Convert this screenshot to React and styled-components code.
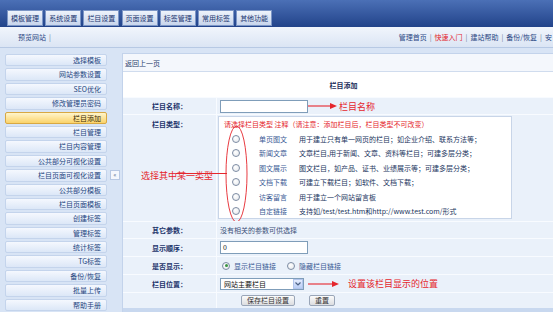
import styled, { createGlobalStyle } from 'styled-components';

/* 전역 */
const GlobalStyle = createGlobalStyle`
    html, body {
        margin: 0;
        padding: 0;
        background: #ffffff;
    }
    body {
        font-family: "Noto Sans CJK SC", "Liberation Sans", sans-serif;
    }
`;

const tabs = ['模板管理', '系统设置', '栏目设置', '页面设置', '标签管理', '常用标签', '其他功能'];

const menus = [
    '选择模板', '网站参数设置', 'SEO优化', '修改管理员密码', '栏目添加', '栏目管理',
    '栏目内容管理', '公共部分可视化设置', '栏目页面可视化设置', '公共部分模板', '栏目页面模板',
    '创建标签', '管理标签', '统计标签', 'TG标签', '备份/恢复', '批量上传', '帮助手册',
];

const types = [
    ['单页图文', '用于建立只有单一网页的栏目；如企业介绍、联系方法等；'],
    ['新闻文章', '文章栏目,用于新闻、文章、资料等栏目；可建多层分类；'],
    ['图文展示', '图文栏目，如产品、证书、业绩展示等；可建多层分类；'],
    ['文档下载', '可建立下载栏目；如软件、文档下载；'],
    ['访客留言', '用于建立一个网站留言板'],
    ['自定链接', '支持如/test/test.htm和http://www.test.com/形式'],
];

/* 스타일 */
const Page = styled.div`
    width: 553px;
    height: 312px;
    overflow: hidden;
    display: flex;
    flex-direction: column;
    font-size: 7px;
`;
const Header = styled.div`
    height: 27px;
    flex-shrink: 0;
    box-sizing: border-box;
    background: linear-gradient(#4b70b6, #22438a);
    display: flex;
    align-items: flex-end;
    gap: 2.2px;
    padding: 0 0 1px 7px;
`;
const Tab = styled.div`
    height: 14px;
    padding: 0 3px;
    border: 1px solid #7c96c6;
    background: linear-gradient(#eef3fb, #c8d5ec);
    color: #1b3670;
    line-height: 14px;
    white-space: nowrap;
`;
const SubBar = styled.div`
    height: 21px;
    flex-shrink: 0;
    box-sizing: border-box;
    background: linear-gradient(#f1f5fc, #dbe5f4);
    border-bottom: 1px solid #b7c9e4;
    display: flex;
    align-items: center;
    padding-left: 18px;
    overflow: hidden;
    color: #2a4784;
    white-space: nowrap;
`;
const SubLeft = styled.div`
    flex: 1;
`;
const SubRight = styled.div`
    flex-shrink: 0;
    margin-right: 1px;
`;
const Sep = styled.span`
    color: #6b7b96;
    margin: 0 3px;
`;
const HotLink = styled.span`
    color: #e3242b;
`;
const Body = styled.div`
    flex: 1;
    min-height: 0;
    display: flex;
    background: #d8e4f5;
`;
const Sidebar = styled.div`
    width: 108px;
    flex-shrink: 0;
    box-sizing: border-box;
    padding: 6px 1px 0 5px;
    display: flex;
    flex-direction: column;
    gap: 2px;
    overflow: hidden;
`;
const MenuItem = styled.div`
    height: 12.4px;
    flex-shrink: 0;
    box-sizing: border-box;
    border: 1px solid ${p => (p.$active ? '#d8a843' : '#c4d4ec')};
    border-radius: 2px;
    background: ${p => (p.$active
        ? 'linear-gradient(#fff5cc, #fbd36a)'
        : 'linear-gradient(#f5f8fe, #dce7f7)')};
    color: ${p => (p.$active ? '#3a2a05' : '#24457f')};
    text-align: right;
    padding-right: 5px;
    line-height: 10.4px;
    white-space: nowrap;
`;
const ToggleCol = styled.div`
    width: 14px;
    flex-shrink: 0;
    display: flex;
    align-items: center;
    justify-content: center;
    padding-bottom: 10px;
    box-sizing: border-box;
`;
const ToggleBtn = styled.div`
    width: 8px;
    height: 8px;
    background: #f4f7fd;
    border: 1px solid #b7c8e3;
    font-size: 6px;
    line-height: 8px;
    text-align: center;
    color: #4a5f86;
`;
const Main = styled.div`
    flex: 1;
    min-width: 0;
    margin-top: 5px;
    background: #c8d8ef;
    border-left: 1px solid #c3d3eb;
    border-top: 1px solid #c3d3eb;
    display: flex;
    flex-direction: column;
`;
const BackBar = styled.div`
    height: 18px;
    flex-shrink: 0;
    box-sizing: border-box;
    padding-left: 2px;
    background: #f4f7fc;
    border-bottom: 1px solid #d0dcee;
    display: flex;
    align-items: center;
    color: #2b3f6d;
`;
const TitleRow = styled.div`
    height: 25px;
    flex-shrink: 0;
    background: #ffffff;
    display: flex;
    align-items: center;
    justify-content: center;
    padding-left: 11px;
    font-weight: bold;
    color: #1a2d5a;
`;
const FormRow = styled.div`
    height: ${p => p.$h}px;
    flex-shrink: 0;
    box-sizing: border-box;
    position: relative;
    display: grid;
    grid-template-columns: 93px 1fr;
    background: #eaf1fa;
    border-top: 1px solid #f8fbff;
`;
const Label = styled.div`
    align-self: ${p => (p.$top ? 'start' : 'center')};
    padding-top: ${p => (p.$top ? '4px' : '0')};
    text-align: center;
    font-weight: bold;
    color: #1b336a;
`;
const Value = styled.div`
    border-left: 1px solid #f8fbff;
    padding-left: ${p => p.$pad ?? 3}px;
    display: flex;
    align-items: ${p => (p.$top ? 'flex-start' : 'center')};
    padding-top: ${p => (p.$top ? '1px' : '0')};
    color: #3a4f78;
    white-space: nowrap;
`;
const TextInput = styled.div`
    width: 88px;
    height: 13px;
    box-sizing: border-box;
    background: #ffffff;
    border: 1px solid #7f9db9;
    padding-left: 2px;
    line-height: 11px;
    color: #111;
`;
const Note = styled.span`
    color: #e5262c;
    font-size: 9px;
    margin-left: ${p => p.$ml ?? 2}px;
`;
const TypeBox = styled.div`
    width: 294px;
    height: 103px;
    box-sizing: border-box;
    background: #ffffff;
    border: 1px solid #c8d5e8;
    padding-left: 5px;
`;
const TypeNote = styled.div`
    height: 14.8px;
    line-height: 14px;
    color: #e5262c;
`;
const OptionRow = styled.div`
    height: 14.4px;
    display: flex;
    align-items: center;
`;
const Radio = styled.span`
    width: 8px;
    height: 8px;
    flex-shrink: 0;
    box-sizing: border-box;
    border-radius: 50%;
    border: 1px solid #7d8ca3;
    background: radial-gradient(circle at 40% 35%, #ffffff, #e3e6ea);
    margin-left: ${p => p.$ml ?? 0}px;
    display: flex;
    align-items: center;
    justify-content: center;
    &::after {
        content: '';
        width: 3px;
        height: 3px;
        border-radius: 50%;
        background: ${p => (p.$checked ? '#3a9442' : 'transparent')};
    }
`;
const TypeName = styled.span`
    width: 40px;
    margin-left: 19px;
    color: #3b5b95;
`;
const TypeDesc = styled.span`
    color: #22355e;
`;
const RadioText = styled.span`
    color: #3b5b95;
    margin: 0 ${p => p.$mr ?? 0}px 0 4px;
`;
const SelectBox = styled.div`
    width: 84px;
    height: 12px;
    box-sizing: border-box;
    background: #ffffff;
    border: 1px solid #7f9db9;
    display: flex;
    align-items: center;
    justify-content: space-between;
    padding-left: 3px;
    margin-right: 4px;
    color: #111;
`;
const SelectArrow = styled.span`
    width: 10px;
    height: 10px;
    box-sizing: border-box;
    background: linear-gradient(#e4ecfd, #b9cdf5);
    border: 1px solid #b2c5ec;
    display: flex;
    align-items: center;
    justify-content: center;
`;
const Btn = styled.div`
    height: 11px;
    box-sizing: border-box;
    padding: 0 5px;
    background: linear-gradient(#fbfbfb, #dcdde0);
    border: 1px solid #9aa6b8;
    border-radius: 2px;
    line-height: 9px;
    color: #333;
    margin-right: 14px;
`;
const Annotation = styled.svg`
    position: absolute;
    left: 0;
    top: 0;
    pointer-events: none;
`;
const AnnoText = styled.div`
    position: absolute;
    left: 18px;
    top: 54px;
    font-size: 9px;
    color: #e5262c;
    white-space: nowrap;
`;
const Filler = styled.div`
    flex: 1;
    background: #c8d8ef;
`;

function Arrow({ w }) {
    return (
        <svg width={w} height="8" viewBox={`0 0 ${w} 8`}>
            <line x1="0" y1="4" x2={w - 6} y2="4" stroke="#e5262c" strokeWidth="1.1" />
            <polygon points={`${w - 7},1 ${w},4 ${w - 7},7`} fill="#e5262c" />
        </svg>
    );
}

export default function App() {
    return (
        <Page>
            <GlobalStyle />
            <Header>
                {tabs.map(t => <Tab key={t}>{t}</Tab>)}
            </Header>
            <SubBar>
                <SubLeft>预览网站<Sep>|</Sep></SubLeft>
                <SubRight>
                    管理首页<Sep>|</Sep><HotLink>快速入门</HotLink><Sep>|</Sep>建站帮助<Sep>|</Sep>备份/恢复<Sep>|</Sep>安
                </SubRight>
            </SubBar>
            <Body>
                <Sidebar>
                    {menus.map(m => <MenuItem key={m} $active={m === '栏目添加'}>{m}</MenuItem>)}
                </Sidebar>
                <ToggleCol>
                    <ToggleBtn>«</ToggleBtn>
                </ToggleCol>
                <Main>
                    <BackBar>返回上一页</BackBar>
                    <TitleRow>栏目添加</TitleRow>
                    <FormRow $h={17}>
                        <Label>栏目名称：</Label>
                        <Value>
                            <TextInput />
                            <Arrow w={29} />
                            <Note>栏目名称</Note>
                        </Value>
                    </FormRow>
                    <FormRow $h={107}>
                        <Label $top>栏目类型：</Label>
                        <Value $top $pad={1}>
                            <TypeBox>
                                <TypeNote>请选择栏目类型 注释（请注意：添加栏目后，栏目类型不可改变）</TypeNote>
                                {types.map(([name, desc]) => (
                                    <OptionRow key={name}>
                                        <Radio $ml={8} />
                                        <TypeName>{name}</TypeName>
                                        <TypeDesc>{desc}</TypeDesc>
                                    </OptionRow>
                                ))}
                            </TypeBox>
                        </Value>
                        <Annotation width="130" height="107" viewBox="0 0 130 107">
                            <ellipse cx="113.5" cy="59" rx="10.5" ry="48" fill="none" stroke="#e5262c" strokeWidth="0.9" />
                            <line x1="53" y1="58.5" x2="104" y2="58.5" stroke="#e5262c" strokeWidth="1.1" />
                        </Annotation>
                        <AnnoText>选择其中某一类型</AnnoText>
                    </FormRow>
                    <FormRow $h={17}>
                        <Label>其它参数：</Label>
                        <Value>没有相关的参数可供选择</Value>
                    </FormRow>
                    <FormRow $h={18}>
                        <Label>显示顺序：</Label>
                        <Value><TextInput>0</TextInput></Value>
                    </FormRow>
                    <FormRow $h={18}>
                        <Label>是否显示：</Label>
                        <Value $pad={5}>
                            <Radio $checked />
                            <RadioText $mr={11}>显示栏目链接</RadioText>
                            <Radio />
                            <RadioText>隐藏栏目链接</RadioText>
                        </Value>
                    </FormRow>
                    <FormRow $h={18}>
                        <Label>栏目位置：</Label>
                        <Value>
                            <SelectBox>
                                网站主要栏目
                                <SelectArrow>
                                    <svg width="6" height="4" viewBox="0 0 6 4">
                                        <polyline points="0.5,0.5 3,3 5.5,0.5" fill="none" stroke="#4d6185" strokeWidth="1.2" />
                                    </svg>
                                </SelectArrow>
                            </SelectBox>
                            <Arrow w={31} />
                            <Note $ml={9}>设置该栏目显示的位置</Note>
                        </Value>
                    </FormRow>
                    <FormRow $h={16}>
                        <span />
                        <Value $pad={24}>
                            <Btn>保存栏目设置</Btn>
                            <Btn>重置</Btn>
                        </Value>
                    </FormRow>
                    <Filler />
                </Main>
            </Body>
        </Page>
    );
}
